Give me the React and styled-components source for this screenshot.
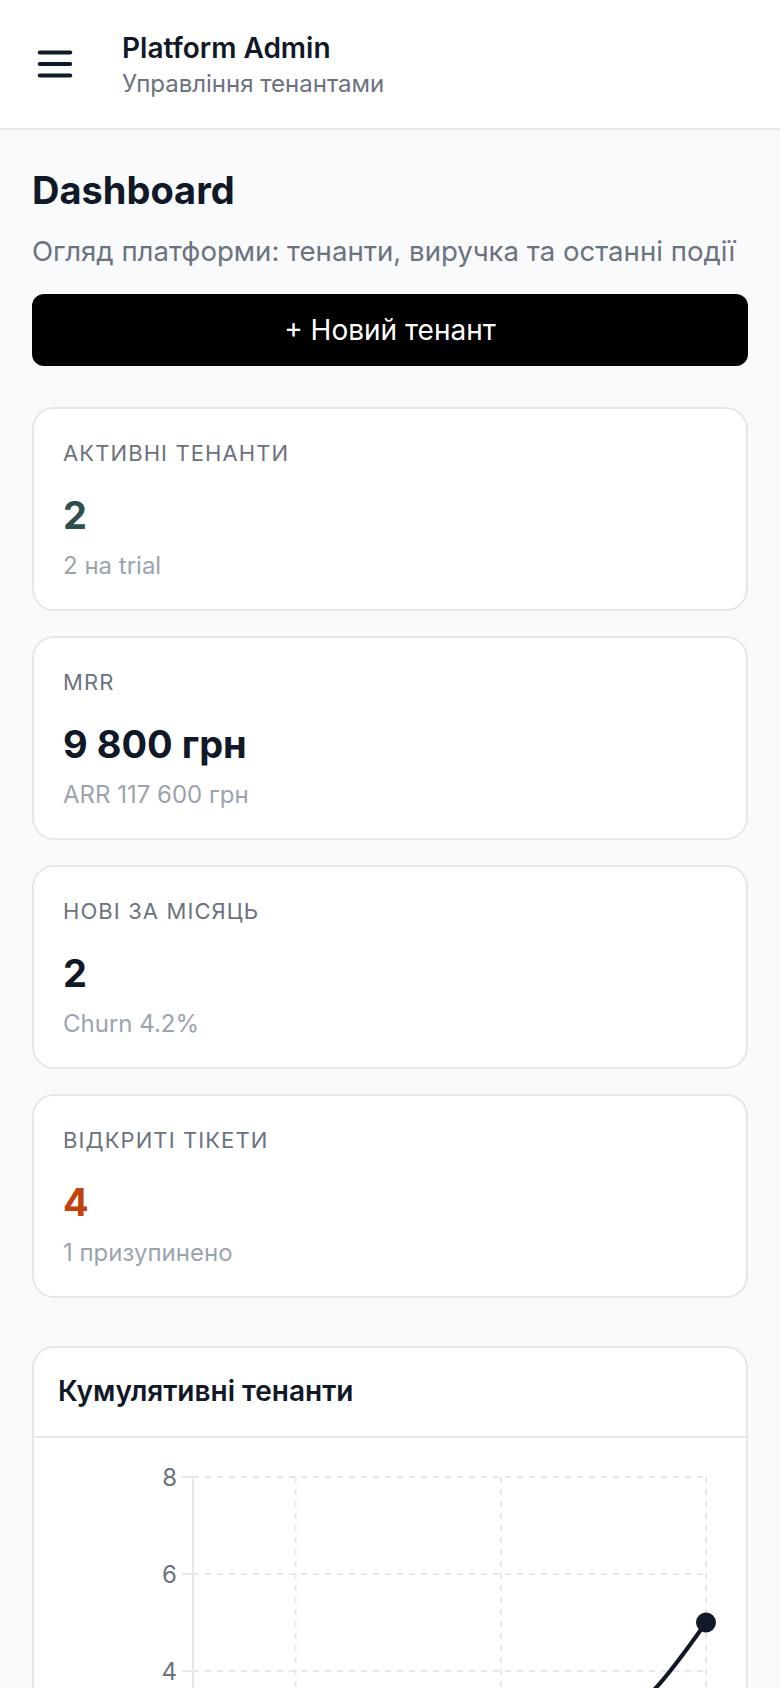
import React from "react";
import styled, { createGlobalStyle } from "styled-components";

const GlobalStyle = createGlobalStyle`
  * { box-sizing: border-box; }
  body {
    margin: 0;
    background: #f9fafb;
    font-family: Inter, "Noto Sans", sans-serif;
    color: #111827;
  }
`;

const Header = styled.header`
  height: 130px;
  display: flex;
  align-items: center;
  gap: 44px;
  padding: 2px 32px 0;
  background: #fff;
  border-bottom: 2px solid #e5e7eb;
`;

const MenuButton = styled.button`
  width: 46px;
  height: 46px;
  margin-top: -2px;
  padding: 0;
  border: 0;
  background: none;
  color: #111827;
  display: flex;
`;

const Brand = styled.div`
  display: flex;
  flex-direction: column;
`;

const BrandTitle = styled.div`
  font-size: 28px;
  line-height: 36px;
  font-weight: 600;
  color: #111827;
`;

const BrandSub = styled.div`
  margin-top: 2px;
  font-size: 24px;
  line-height: 32px;
  color: #6b7280;
`;

const Main = styled.main`
  padding: 36px 32px 48px;
`;

const PageTitle = styled.h1`
  margin: 0;
  font-size: 38px;
  line-height: 48px;
  font-weight: 700;
  color: #111827;
`;

const PageSub = styled.p`
  margin: 19px 0 0;
  font-size: 27.6px;
  line-height: 36px;
  color: #6b7280;
  white-space: nowrap;
`;

const PrimaryButton = styled.button`
  width: 100%;
  height: 72px;
  margin-top: 25px;
  border: 0;
  border-radius: 12px;
  background: #000;
  color: #fff;
  font-family: inherit;
  font-size: 28px;
  font-weight: 400;
`;

const Stats = styled.div`
  display: flex;
  flex-direction: column;
  gap: 25px;
  margin-top: 41px;
`;

const Card = styled.section`
  background: #fff;
  border: 2px solid #e5e7eb;
  border-radius: 22px;
`;

const StatCard = styled(Card)`
  padding: 28px 29px 27px;
`;

const StatLabel = styled.div`
  font-size: 22px;
  line-height: 32px;
  letter-spacing: 0.05em;
  text-transform: uppercase;
  color: #6b7280;
`;

const StatValue = styled.div`
  margin-top: 22px;
  font-size: 38px;
  line-height: 48px;
  font-weight: 700;
  color: ${(p) => p.$color || "#111827"};
`;

const StatHint = styled.div`
  margin-top: 11px;
  font-size: 24px;
  line-height: 32px;
  color: #9ca3af;
`;

const ChartCard = styled(Card)`
  margin-top: 48px;
  overflow: hidden;
`;

const ChartHead = styled.div`
  padding: 23px 24px 25px;
  border-bottom: 2px solid #e5e7eb;
  font-size: 28px;
  line-height: 40px;
  font-weight: 600;
  color: #111827;
`;

const ChartBody = styled.div`
  svg { display: block; }
`;

const stats = [
  { label: "Активні тенанти", value: "2", hint: "2 на trial", color: "#2f4f4f" },
  { label: "MRR", value: "9 800 грн", hint: "ARR 117 600 грн" },
  { label: "Нові за місяць", value: "2", hint: "Churn 4.2%" },
  { label: "Відкриті тікети", value: "4", hint: "1 призупинено", color: "#c2410c" },
];

const series = [1, 2, 2, 3, 3, 5];

// chart geometry in px
const W = 712;
const H = 480;
const X0 = 159;
const X1 = 672;
const YTOP = 39;
const UNIT = 48.5;
const yOf = (v) => YTOP + (8 - v) * UNIT;

function monotonePath(pts) {
  const n = pts.length;
  const h = pts[1][0] - pts[0][0];
  const d = [];
  for (let i = 0; i < n - 1; i++) d.push((pts[i + 1][1] - pts[i][1]) / h);
  const m = new Array(n).fill(0);
  for (let i = 1; i < n - 1; i++) {
    if (d[i - 1] * d[i] <= 0) m[i] = 0;
    else m[i] = (2 * d[i - 1] * d[i]) / (d[i - 1] + d[i]);
  }
  m[0] = (3 * d[0] - m[1]) / 2;
  m[n - 1] = (3 * d[n - 2] - m[n - 2]) / 2;
  let path = `M${pts[0][0]},${pts[0][1]}`;
  for (let i = 0; i < n - 1; i++) {
    const [xa, ya] = pts[i];
    const [xb, yb] = pts[i + 1];
    path += ` C${xa + h / 3},${ya + (m[i] * h) / 3} ${xb - h / 3},${yb - (m[i + 1] * h) / 3} ${xb},${yb}`;
  }
  return path;
}

function Chart() {
  const step = (X1 - X0) / (series.length - 1);
  const pts = series.map((v, i) => [X0 + i * step, yOf(v)]);
  const last = pts[pts.length - 1];
  const ticks = [8, 6, 4, 2, 0];
  const vx = [1, 3, 5].map((i) => X0 + i * step);
  return (
    <svg width={W} height={H} viewBox={`0 0 ${W} ${H}`}>
      <g stroke="#e5e7eb" strokeWidth="2" strokeDasharray="6 6">
        {ticks.map((t) => (
          <line key={t} x1={X0} x2={X1} y1={yOf(t)} y2={yOf(t)} />
        ))}
        {vx.map((x) => (
          <line key={x} x1={x} x2={x} y1={YTOP} y2={yOf(0)} />
        ))}
      </g>
      <line x1={X0} x2={X0} y1={YTOP} y2={yOf(0)} stroke="#e5e7eb" strokeWidth="2" />
      {ticks.map((t) => (
        <g key={t}>
          <line x1={X0 - 11} x2={X0} y1={yOf(t)} y2={yOf(t)} stroke="#e5e7eb" strokeWidth="2" />
          <text
            x={X0 - 16}
            y={yOf(t)}
            dy="0.36em"
            textAnchor="end"
            fontSize="24"
            fill="#6b7280"
            fontFamily="Inter, sans-serif"
          >
            {t}
          </text>
        </g>
      ))}
      <path d={monotonePath(pts)} fill="none" stroke="#111827" strokeWidth="4" />
      <circle cx={last[0]} cy={last[1]} r="10" fill="#111827" />
    </svg>
  );
}

export default function App() {
  return (
    <>
      <GlobalStyle />
      <Header>
        <MenuButton aria-label="Меню">
          <svg width="46" height="46" viewBox="0 0 24 24" fill="none" stroke="currentColor" strokeWidth="2" strokeLinecap="round">
            <line x1="4" y1="6" x2="20" y2="6" />
            <line x1="4" y1="12" x2="20" y2="12" />
            <line x1="4" y1="18" x2="20" y2="18" />
          </svg>
        </MenuButton>
        <Brand>
          <BrandTitle>Platform Admin</BrandTitle>
          <BrandSub>Управління тенантами</BrandSub>
        </Brand>
      </Header>
      <Main>
        <PageTitle>Dashboard</PageTitle>
        <PageSub>Огляд платформи: тенанти, виручка та останні події</PageSub>
        <PrimaryButton>+ Новий тенант</PrimaryButton>
        <Stats>
          {stats.map((s) => (
            <StatCard key={s.label}>
              <StatLabel>{s.label}</StatLabel>
              <StatValue $color={s.color}>{s.value}</StatValue>
              <StatHint>{s.hint}</StatHint>
            </StatCard>
          ))}
        </Stats>
        <ChartCard>
          <ChartHead>Кумулятивні тенанти</ChartHead>
          <ChartBody>
            <Chart />
          </ChartBody>
        </ChartCard>
      </Main>
    </>
  );
}
